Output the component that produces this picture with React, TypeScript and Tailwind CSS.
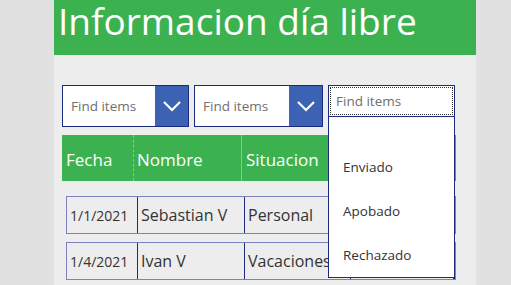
import React from "react";

const Chevron = () => (
  <svg width="20" height="12" viewBox="0 0 20 12" fill="none">
    <path d="M2 2 L10 10 L18 2" stroke="white" strokeWidth="2.2" />
  </svg>
);

const Dropdown = ({ w }: { w: string }) => (
  <div className={`${w} h-[42px] bg-white border border-[#1b2a7c] flex`}>
    <div className="flex-1 flex items-center pl-[8px] text-[13.5px] text-[#6f6f6f]">Find items</div>
    <div className="w-[33px] h-full bg-[#3b62b3] flex items-center justify-center">
      <Chevron />
    </div>
  </div>
);

export default function App() {
  const rows = [
    ["1/1/2021", "Sebastian V", "Personal"],
    ["1/4/2021", "Ivan V", "Vacaciones"],
  ];
  return (
    <div
      className="w-[511px] h-[285px] bg-[#e1e1e1] pl-[54px] overflow-hidden"
      style={{ fontFamily: '"Open Sans", "Noto Sans", sans-serif' }}
    >
      <div className="w-[422px] h-[285px] bg-[#ededed] flex flex-col">
        <div className="h-[55px] bg-[#3cb150] pl-[4px] pt-[1px] text-white text-[37px] leading-[40px]">
          Informacion día libre
        </div>
        <div className="px-[8px] pt-[30px] flex flex-col">
          <div className="flex gap-[5px] relative">
            <Dropdown w="w-[127px]" />
            <Dropdown w="w-[129px]" />
            <div className="w-[127px] h-[42px] relative">
              <div className="absolute left-0 top-0 w-[127px] h-[193px] bg-white border border-[#1b2a7c] z-10 flex flex-col">
                <div className="h-[33px] border-b border-[#1b2a7c] p-[1px]">
                  <div className="h-full border border-dotted border-[#333] flex items-center pl-[5px] text-[13.5px] text-[#6f6f6f]">
                    Find items
                  </div>
                </div>
                <div className="pl-[14px] text-[13.5px] text-[#333] flex flex-col">
                  <div className="h-[44px] flex items-center mt-[28px]">Enviado</div>
                  <div className="h-[44px] flex items-center">Apobado</div>
                  <div className="h-[44px] flex items-center">Rechazado</div>
                </div>
              </div>
            </div>
          </div>
          <div className="mt-[8px] h-[46px] w-[394px] bg-[#3cb150] flex text-white text-[17px]">
            <div className="w-[72px] flex items-center pl-[4px] pt-[3px] border-r border-dashed border-[#7fcf8c]">Fecha</div>
            <div className="w-[108px] flex items-center pl-[3px] pt-[3px] border-r border-[#7fcf8c]">Nombre</div>
            <div className="flex-1 flex items-center pl-[4px] pt-[3px]">Situacion</div>
          </div>
          <div className="mt-[15px] flex flex-col gap-[8px] pl-[4px]">
            {rows.map((r) => (
              <div key={r[0]} className="w-[390px] h-[38px] border border-[#7b83bc] flex text-[#333]">
                <div className="w-[71px] flex items-center pl-[3px] text-[14px] border-r border-[#1b2a7c]">{r[0]}</div>
                <div className="w-[107px] flex items-center pl-[3px] text-[16px] border-r border-[#1b2a7c]">{r[1]}</div>
                <div className="w-[106px] flex items-center pl-[3px] text-[16px] border-r border-[#1b2a7c] whitespace-nowrap">{r[2]}</div>
                <div className="flex-1 border-r-2 border-[#1b2a7c]"></div>
              </div>
            ))}
          </div>
        </div>
      </div>
    </div>
  );
}
